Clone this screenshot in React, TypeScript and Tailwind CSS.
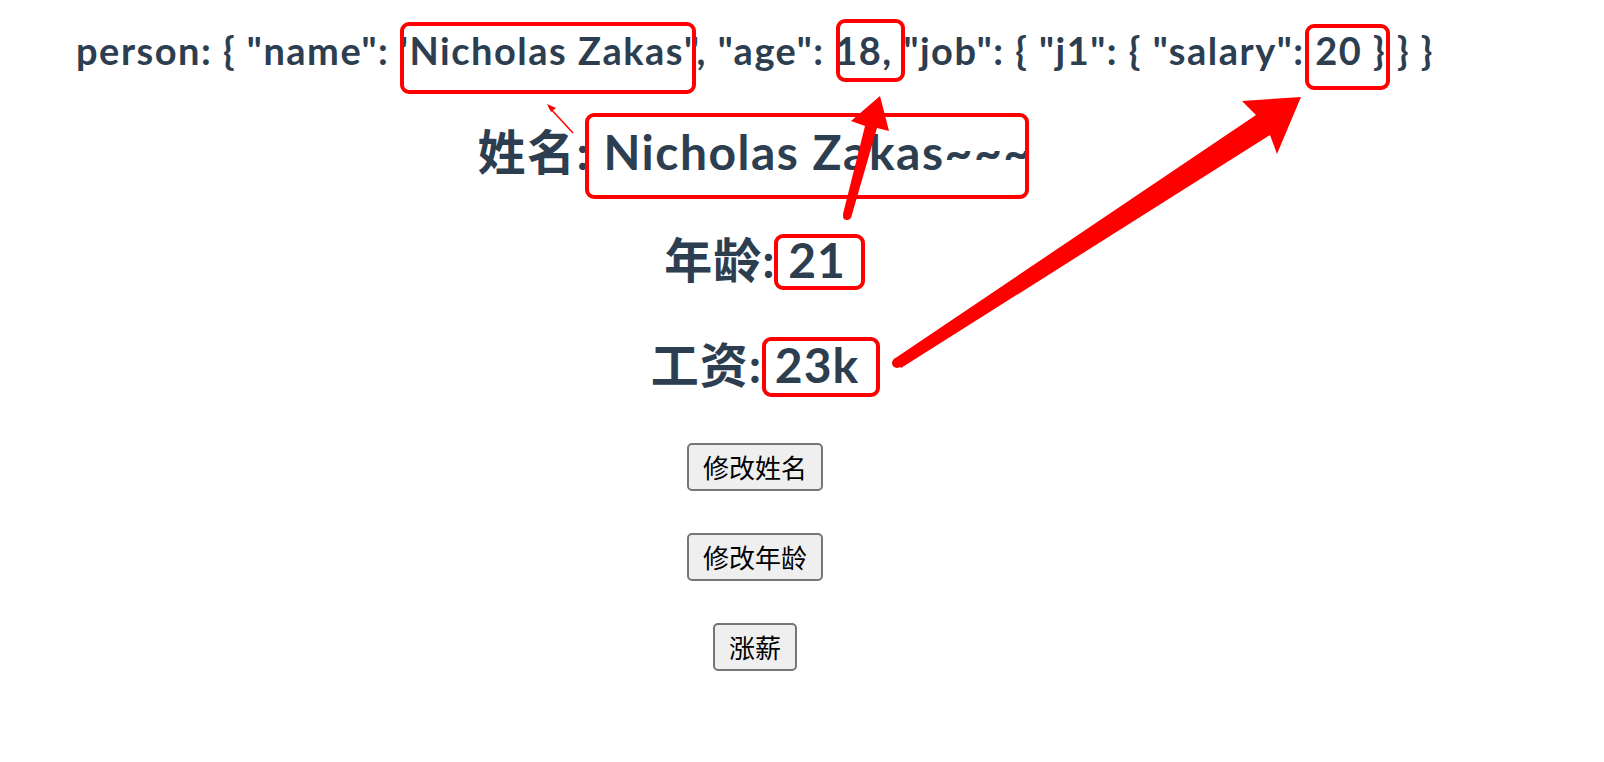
const person = {
  name: 'Nicholas Zakas~~~',
  age: 21,
  salary: '23k',
};

function Annotations() {
  return (
    <svg
      className="pointer-events-none absolute left-0 top-0"
      width={1604}
      height={762}
      viewBox="0 0 1604 762"
      fill="none"
    >
      <g stroke="#fe0000" strokeWidth={4}>
        <rect x={402} y={24} width={292} height={68} rx={7} />
        <rect x={838} y={21} width={65} height={59} rx={7} />
        <rect x={1307} y={26} width={81} height={62} rx={7} />
        <rect x={587} y={115} width={440} height={82} rx={7} />
        <rect x={776} y={236} width={87} height={52} rx={7} />
        <rect x={764} y={339} width={114} height={56} rx={7} />
      </g>
      <g fill="#fe0000">
        <polygon points="843,214 865,126 851,121 880,96 889,131 877,128 851,218" />
        <circle cx={847} cy={216} r={4} />
        <polygon points="894,359 1256,115 1242,101 1301,97 1277,154 1270,135 901,368" />
        <circle cx={897} cy={363} r={5} />
      </g>
      <line x1={573} y1={133} x2={549} y2={107} stroke="#fe0000" strokeWidth={1.5} />
      <polygon points="547,104 556,108 551,112" fill="#fe0000" />
    </svg>
  );
}

export default function App() {
  return (
    <div className="relative h-[762px] w-[1604px] overflow-hidden bg-white">
      <div className="flex w-[1510px] flex-col items-center text-center font-['Lato','Noto_Sans_CJK_SC',sans-serif] text-[#2c3e50]">
        <h3 className="mt-[25px] text-[38px] font-bold leading-[51px] tracking-[1.5px] whitespace-nowrap">
          person: {'{'} "name": 'Nicholas Zakas", "age": 18, "job": {'{'} "j1": {'{'} "salary": 20 {'}'} {'}'} {'}'}
        </h3>
        <h2 className="mt-[43px] text-[48px] font-bold leading-[66px] tracking-[1.5px]">姓名: {person.name}</h2>
        <h2 className="mt-[42px] text-[48px] font-bold leading-[66px] tracking-[1px]">年龄: {person.age}</h2>
        <h2 className="mt-[39px] text-[48px] font-bold leading-[66px] tracking-[1px]">工资: {person.salary}</h2>

        <div className="mt-[45px] flex flex-col items-center gap-[42px] font-['Noto_Sans_CJK_SC',sans-serif] text-[26px] text-black">
          <button className="h-[48px] rounded-[5px] border-2 border-[#767676] bg-[#efefef] px-[14px] leading-none">修改姓名</button>
          <button className="h-[48px] rounded-[5px] border-2 border-[#767676] bg-[#efefef] px-[14px] leading-none">修改年龄</button>
          <button className="h-[48px] rounded-[5px] border-2 border-[#767676] bg-[#efefef] px-[14px] leading-none">涨薪</button>
        </div>
      </div>
      <Annotations />
    </div>
  );
}
